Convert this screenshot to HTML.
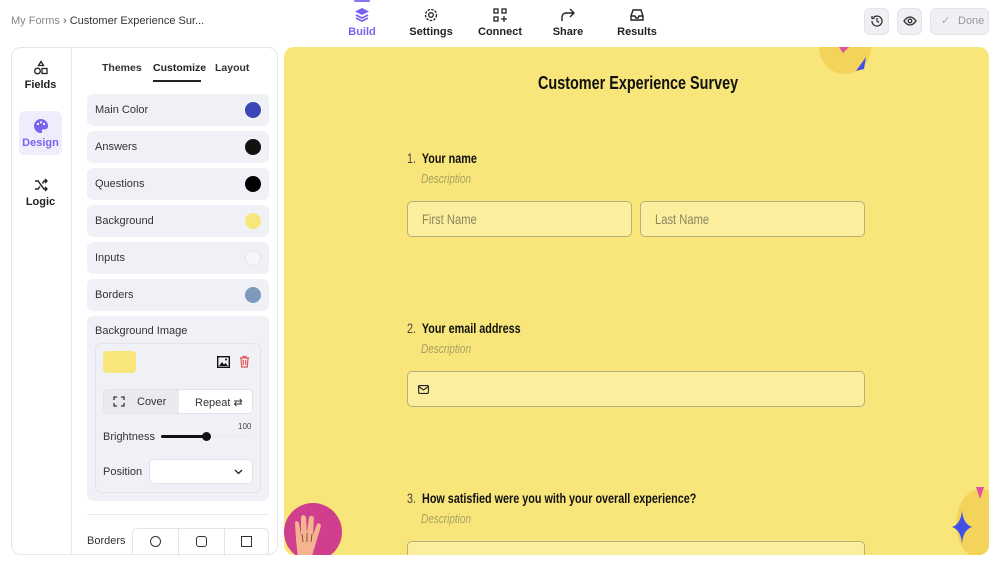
<!DOCTYPE html>
<html><head><meta charset="utf-8"><style>
*{box-sizing:border-box;margin:0;padding:0}
body{width:1000px;height:564px;overflow:hidden;background:#fff;font-family:"Liberation Sans",sans-serif;position:relative;color:#222}
.a{position:absolute}
.nav{font-size:11px;font-weight:bold;text-align:center;width:60px}
.nav svg{display:block;margin:0 auto 3px}
.row{position:absolute;left:87px;width:182px;height:32px;background:#f0f1f6;border-radius:6px;font-size:11px;line-height:32px;padding-left:8px;color:#333}
.dot{position:absolute;right:8px;top:8px;width:16px;height:16px;border-radius:50%}
.nr{transform:scaleX(.8);transform-origin:0 0;white-space:nowrap}
.q{font-size:13.5px;font-weight:bold;color:#111}
.desc{font-size:12.5px;font-style:italic;color:#a8a060}
.inp{position:absolute;background:#fbee9c;border:1px solid #b8b07c;border-radius:5px;font-size:14px;color:#8a8660;line-height:34px}
.inp span{position:absolute;left:14px;top:0}
.btn{position:absolute;top:8px;height:27px;border-radius:6px;background:#eef0f4;border:1px solid #e2e4ea}
.tab{position:absolute;top:62px;font-size:10.5px;font-weight:bold;color:#333}
</style></head><body>
<div class="a" style="left:11px;top:15px;font-size:11px;color:#888">My Forms <span style="color:#555">›</span> <span style="color:#333">Customer Experience Sur...</span></div>

<div class="a" style="left:354px;top:0;width:16px;height:2px;background:#8a74f0;border-radius:1px"></div>
<div class="a nav" style="left:332px;top:7px;color:#7b62ee"><svg width="16" height="16" viewBox="0 0 16 16"><path d="M8 1L15 4.5 8 8 1 4.5z" fill="#7b62ee"/><path d="M2 8l6 3 6-3M2 11l6 3 6-3" stroke="#7b62ee" stroke-width="1.8" fill="none"/></svg>Build</div>
<div class="a nav" style="left:401px;top:7px"><svg width="16" height="16" viewBox="0 0 16 16"><circle cx="8" cy="8" r="2.3" fill="none" stroke="#222" stroke-width="1.3"/><circle cx="8" cy="8" r="5.5" fill="none" stroke="#222" stroke-width="1.3" stroke-dasharray="2.5 1.2"/></svg>Settings</div>
<div class="a nav" style="left:470px;top:7px"><svg width="16" height="16" viewBox="0 0 16 16" fill="none" stroke="#222" stroke-width="1.3"><rect x="2" y="2" width="4" height="4"/><rect x="10" y="2" width="4" height="4"/><rect x="2" y="10" width="4" height="4"/><path d="M12 9v6M9 12h6"/></svg>Connect</div>
<div class="a nav" style="left:538px;top:7px"><svg width="16" height="16" viewBox="0 0 16 16" fill="none" stroke="#222" stroke-width="1.4"><path d="M2 14V10a4 4 0 0 1 4-4h8M10 2l4 4-4 4"/></svg>Share</div>
<div class="a nav" style="left:607px;top:7px"><svg width="16" height="16" viewBox="0 0 16 16" fill="none" stroke="#222" stroke-width="1.4"><path d="M2 9l2-6h8l2 6v4H2zM2 9h4l1 2h2l1-2h4"/></svg>Results</div>

<div class="btn" style="left:864px;width:25px"><svg class="a" style="left:5px;top:5px" width="14" height="14" viewBox="0 0 14 14" fill="none" stroke="#333" stroke-width="1.3"><path d="M2 7a5 5 0 1 0 1.5-3.5M2 2v2.5h2.5M7 4v3l2 1.5"/></svg></div>
<div class="btn" style="left:897px;width:25px"><svg class="a" style="left:5px;top:6px" width="14" height="12" viewBox="0 0 14 12" fill="none" stroke="#333" stroke-width="1.3"><path d="M1 6s2.5-4 6-4 6 4 6 4-2.5 4-6 4-6-4-6-4z"/><circle cx="7" cy="6" r="1.8"/></svg></div>
<div class="btn" style="left:930px;width:59px;font-size:11px;color:#999;line-height:25px;padding-left:27px">Done<span class="a" style="left:10px;top:0;color:#aaa">✓</span></div>

<div class="a" style="left:11px;top:47px;width:267px;height:508px;border:1px solid #e4e6eb;border-radius:10px;overflow:hidden">
 <div class="a" style="left:59px;top:0;width:1px;height:508px;background:#e8e9ee"></div>
</div>
<div class="a nav" style="left:11px;top:60px;width:59px"><svg width="16" height="16" viewBox="0 0 16 16" fill="none" stroke="#222" stroke-width="1.3"><path d="M8 1.5l2.5 4h-5z"/><circle cx="4.5" cy="11" r="2.8"/><rect x="9" y="8.5" width="5" height="5"/></svg>Fields</div>
<div class="a" style="left:19px;top:111px;width:43px;height:44px;background:#efedfc;border-radius:6px"></div>
<div class="a nav" style="left:11px;top:118px;width:59px;color:#7b62ee"><svg width="16" height="16" viewBox="0 0 16 16"><path d="M8 1a7 7 0 0 0 0 14c1.2 0 1.5-.8 1-1.6-.6-1 0-2 1.2-2H12a3 3 0 0 0 3-3A7 7 0 0 0 8 1z" fill="#7b62ee"/><circle cx="5" cy="6" r="1.1" fill="#fff"/><circle cx="8" cy="4.3" r="1.1" fill="#fff"/><circle cx="11" cy="6" r="1.1" fill="#fff"/></svg>Design</div>
<div class="a nav" style="left:11px;top:177px;width:59px"><svg width="16" height="16" viewBox="0 0 16 16" fill="none" stroke="#222" stroke-width="1.4"><path d="M2 4h3l6 8h3M2 12h3l2-2.5M9.5 6.5L11 4h3M12 2l2 2-2 2M12 10l2 2-2 2"/></svg>Logic</div>

<div class="tab" style="left:102px">Themes</div>
<div class="tab" style="left:153px;color:#222">Customize</div>
<div class="a" style="left:153px;top:80px;width:48px;height:2px;background:#222"></div>
<div class="tab" style="left:215px">Layout</div>

<div class="row" style="top:94px">Main Color<span class="dot" style="background:#3a47b4"></span></div>
<div class="row" style="top:131px">Answers<span class="dot" style="background:#111"></span></div>
<div class="row" style="top:168px">Questions<span class="dot" style="background:#000"></span></div>
<div class="row" style="top:205px">Background<span class="dot" style="background:#f8e67a"></span></div>
<div class="row" style="top:242px">Inputs<span class="dot" style="background:#f7f7fa;border:1px solid #e4e4ea"></span></div>
<div class="row" style="top:279px">Borders<span class="dot" style="background:#7d9abb"></span></div>

<div class="a" style="left:87px;top:316px;width:182px;height:185px;background:#f0f1f6;border-radius:6px"></div>
<div class="a" style="left:95px;top:325px;font-size:11px;color:#333">Background Image</div>
<div class="a" style="left:95px;top:343px;width:166px;height:150px;border:1px solid #e3e4ea;border-radius:6px"></div>
<div class="a" style="left:103px;top:351px;width:33px;height:22px;background:#f8e67a;border-radius:4px"></div>
<svg class="a" style="left:217px;top:356px" width="13" height="12" viewBox="0 0 13 12"><rect x=".7" y=".7" width="11.6" height="10.6" fill="none" stroke="#111" stroke-width="1.4"/><path d="M2 10l3-4 2 2.5 1.5-1.5L11 10z" fill="#111"/><circle cx="9" cy="3.5" r="1" fill="#111"/></svg>
<svg class="a" style="left:239px;top:355px" width="11" height="13" viewBox="0 0 11 13" fill="none" stroke="#e05555" stroke-width="1.2"><path d="M1 3h9M4 3V1.5h3V3M2 3l.7 9h5.6L9 3M4.3 5v5M6.7 5v5"/></svg>
<div class="a" style="left:103px;top:389px;width:150px;height:25px;background:#fff;border:1px solid #e3e4ea;border-radius:5px;overflow:hidden">
 <div class="a" style="left:0;top:0;width:75px;height:25px;background:#e9eaf0"></div>
 <svg class="a" style="left:9px;top:6px" width="12" height="11" viewBox="0 0 12 11" fill="none" stroke="#333" stroke-width="1.3"><path d="M1 4V1h3M8 1h3v3M11 7v3H8M4 10H1V7"/></svg>
 <div class="a" style="left:33px;top:6px;font-size:11px;color:#333">Cover</div>
 <div class="a" style="left:91px;top:6px;font-size:11px;color:#333">Repeat ⇄</div>
</div>
<div class="a" style="left:238px;top:422px;font-size:8px;color:#444">100</div>
<div class="a" style="left:103px;top:431px;font-size:11px;color:#333">Brightness</div>
<div class="a" style="left:161px;top:435px;width:91px;height:3px;background:#eceef3;border-radius:2px"></div>
<div class="a" style="left:161px;top:435px;width:45px;height:3px;background:#111;border-radius:2px"></div>
<div class="a" style="left:202px;top:432px;width:9px;height:9px;background:#111;border-radius:50%"></div>
<div class="a" style="left:103px;top:466px;font-size:11px;color:#333">Position</div>
<div class="a" style="left:149px;top:459px;width:104px;height:25px;background:#fff;border:1px solid #e3e4ea;border-radius:5px"><svg class="a" style="left:84px;top:9px" width="9" height="6" viewBox="0 0 9 6" fill="none" stroke="#222" stroke-width="1.3"><path d="M1 1l3.5 3.5L8 1"/></svg></div>
<div class="a" style="left:87px;top:514px;width:182px;height:1px;background:#e8e9ee"></div>
<div class="a" style="left:87px;top:535px;font-size:11px;color:#333">Borders</div>
<div class="a" style="left:132px;top:528px;width:137px;height:27px;border:1px solid #e3e4ea;border-bottom:none;border-radius:5px 5px 0 0">
 <div class="a" style="left:45px;top:0;width:1px;height:27px;background:#e3e4ea"></div>
 <div class="a" style="left:91px;top:0;width:1px;height:27px;background:#e3e4ea"></div>
 <div class="a" style="left:17px;top:7px;width:11px;height:11px;border:1.2px solid #333;border-radius:50%"></div>
 <div class="a" style="left:63px;top:7px;width:11px;height:11px;border:1.2px solid #333;border-radius:3px"></div>
 <div class="a" style="left:108px;top:7px;width:11px;height:11px;border:1.2px solid #333"></div>
</div>

<div class="a" style="left:284px;top:47px;width:705px;height:508px;background:#f8e67a;border-radius:10px;overflow:hidden">
 <div class="a" style="left:535px;top:-25px;width:52px;height:52px;border-radius:50%;background:#f3d35a"></div>
 <svg class="a" style="left:568px;top:8px" width="16" height="18" viewBox="0 0 16 18"><path d="M4 16L14 2 12 14z" fill="#4150e6"/></svg>
 <svg class="a" style="left:555px;top:0" width="10" height="6"><path d="M0 0h10L4 6z" fill="#e04fa0"/></svg>
 <div class="a" style="left:0;top:456px;width:58px;height:58px;border-radius:50%;background:#cf3f8e"></div>
 <svg class="a" style="left:8px;top:462px" width="40" height="50" viewBox="0 0 40 50"><path d="M6 50L4 30 3 14q1-4 4 0l2 12 0-18q2-4 5 0l1 16 2-16q3-3 5 1l-1 17 4-11q3-2 4 2l-6 20-4 13z" fill="#f4b48f"/><path d="M10 25l1 8M15 24l0 9M20 25l-1 8" stroke="#6a3a2a" stroke-width=".8"/></svg>
 <div class="a" style="left:672px;top:442px;width:50px;height:70px;border-radius:50%;background:#f3d35a"></div>
 <svg class="a" style="left:668px;top:463px" width="20" height="34" viewBox="0 0 20 34"><path d="M10 0Q11 14 20 17 11 20 10 34 9 20 0 17 9 14 10 0z" fill="#4150e6"/></svg>
 <svg class="a" style="left:692px;top:440px" width="8" height="12"><path d="M0 0h8L4 12z" fill="#e04fa0"/></svg>
</div>
<div class="a nr" style="left:538px;top:73px;font-size:18px;font-weight:bold;color:#111">Customer Experience Survey</div>

<div class="a q nr" style="left:407px;top:151px"><span style="font-weight:normal;color:#444">1.</span>&nbsp; Your name</div>
<div class="a desc nr" style="left:421px;top:172px">Description</div>
<div class="inp" style="left:407px;top:201px;width:225px;height:36px"><span class="nr">First Name</span></div>
<div class="inp" style="left:640px;top:201px;width:225px;height:36px"><span class="nr">Last Name</span></div>

<div class="a q nr" style="left:407px;top:321px"><span style="font-weight:normal;color:#444">2.</span>&nbsp; Your email address</div>
<div class="a desc nr" style="left:421px;top:342px">Description</div>
<div class="inp" style="left:407px;top:371px;width:458px;height:36px"><svg class="a" style="left:10px;top:13px" width="11" height="9" viewBox="0 0 11 9" fill="none" stroke="#222" stroke-width="1.1"><rect x=".6" y=".6" width="9.8" height="7.8" rx="1"/><path d="M.6 1.5l4.9 3.5 4.9-3.5"/></svg></div>

<div class="a q nr" style="left:407px;top:491px"><span style="font-weight:normal;color:#444">3.</span>&nbsp; How satisfied were you with your overall experience?</div>
<div class="a desc nr" style="left:421px;top:512px">Description</div>
<div class="a" style="left:407px;top:541px;width:458px;height:14px;background:#fbee9c;border:1px solid #b8b07c;border-bottom:none;border-radius:5px 5px 0 0"></div>
</body></html>
